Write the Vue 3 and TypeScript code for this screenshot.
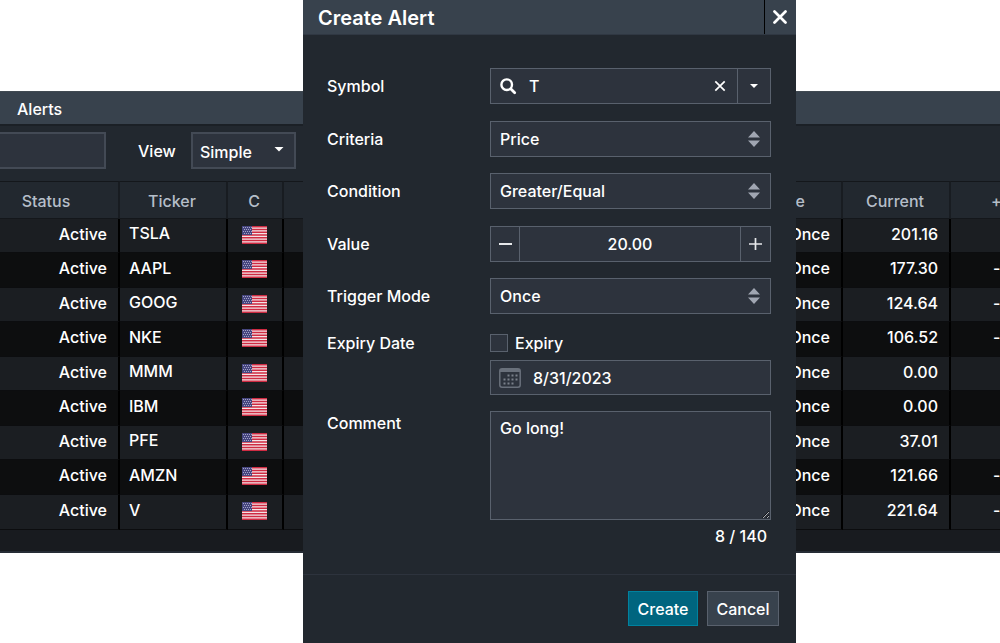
<script setup lang="ts">
import { ref } from 'vue'

interface Alert {
  ticker: string
  current: string
  change: string
}

const alerts: Alert[] = [
  { ticker: 'TSLA', current: '201.16', change: '' },
  { ticker: 'AAPL', current: '177.30', change: '-' },
  { ticker: 'GOOG', current: '124.64', change: '-' },
  { ticker: 'NKE', current: '106.52', change: '-' },
  { ticker: 'MMM', current: '0.00', change: '' },
  { ticker: 'IBM', current: '0.00', change: '' },
  { ticker: 'PFE', current: '37.01', change: '' },
  { ticker: 'AMZN', current: '121.66', change: '-' },
  { ticker: 'V', current: '221.64', change: '-' },
]

const filter = ref('')
const view = ref('Simple')
const symbol = ref('T')
const criteria = ref('Price')
const condition = ref('Greater/Equal')
const amount = ref('20.00')
const trigger = ref('Once')
const expires = ref(false)
const expiry = ref('8/31/2023')
const comment = ref('Go long!')

function step(delta: number) {
  amount.value = (Number(amount.value) + delta).toFixed(2)
}
</script>

<template>
  <div class="page">
    <main class="panel">
      <h2 class="panel-title">Alerts</h2>
      <div class="toolbar">
        <input v-model="filter" class="filter" type="text" aria-label="Filter" />
        <label for="view">View</label>
        <div class="view-box">
          <select id="view" v-model="view">
            <option>Simple</option>
          </select>
          <svg class="caret" width="10" height="5" viewBox="0 0 10 5" aria-hidden="true"><path d="M.5 0h9L5 4.6z" fill="#fff" /></svg>
        </div>
      </div>
      <table>
        <colgroup>
          <col class="c-status" />
          <col class="c-ticker" />
          <col class="c-country" />
          <col />
          <col class="c-current" />
          <col class="c-change" />
        </colgroup>
        <thead>
          <tr>
            <th class="status">Status</th>
            <th>Ticker</th>
            <th>C</th>
            <th class="mode">e</th>
            <th>Current</th>
            <th class="change">+</th>
          </tr>
        </thead>
        <tbody>
          <tr v-for="a in alerts" :key="a.ticker">
            <td class="num">Active</td>
            <td class="ticker">{{ a.ticker }}</td>
            <td class="country">
              <svg class="flag" width="25" height="18" viewBox="0 0 25 18" role="img" aria-label="US">
                <rect width="25" height="18" fill="#f3e3e6" />
                <path d="M0 .7h25M0 3.5h25M0 6.2h25M0 9h25M0 11.8h25M0 14.5h25M0 17.3h25" stroke="#cf2b42" stroke-width="1.4" />
                <rect width="10" height="9" fill="#46467f" />
                <path d="M1 1.5h9M2 3.5h8M1 5.5h9M2 7.5h8" stroke="#a3a3c6" stroke-width="1" stroke-dasharray="1 1" />
              </svg>
            </td>
            <td class="num">Once</td>
            <td class="num">{{ a.current }}</td>
            <td class="change">{{ a.change }}</td>
          </tr>
        </tbody>
      </table>
    </main>

    <section class="dialog" role="dialog" aria-labelledby="dialog-title">
      <header>
        <h1 id="dialog-title">Create Alert</h1>
        <button class="close" type="button" aria-label="Close">
          <svg width="14" height="14" viewBox="0 0 14 14"><path d="M1.5 1.5l11 11M12.5 1.5l-11 11" stroke="#fff" stroke-width="2.7" stroke-linecap="round" /></svg>
        </button>
      </header>

      <form @submit.prevent>
        <div class="fields">
          <label for="symbol">Symbol</label>
          <div class="box">
            <svg class="search" width="17" height="17" viewBox="0 0 17 17" aria-hidden="true"><circle cx="6.7" cy="6.7" r="5.3" fill="none" stroke="#fff" stroke-width="2.4" /><path d="M10.7 10.7l4 4" stroke="#fff" stroke-width="2.8" stroke-linecap="round" /></svg>
            <input id="symbol" v-model="symbol" type="text" />
            <button class="clear" type="button" aria-label="Clear" @click="symbol = ''">
              <svg width="12" height="12" viewBox="0 0 12 12"><path d="M1.3 1.3l9.4 9.4M10.7 1.3l-9.4 9.4" stroke="#fff" stroke-width="1.7" /></svg>
            </button>
            <button class="drop" type="button" aria-label="Show symbols">
              <svg width="8" height="4" viewBox="0 0 8 4"><path d="M0 0h8L4 4z" fill="#fff" /></svg>
            </button>
          </div>

          <label for="criteria">Criteria</label>
          <div class="box">
            <select id="criteria" v-model="criteria"><option>Price</option></select>
            <svg class="sort" width="12" height="16" viewBox="0 0 12 16" aria-hidden="true"><path d="M6 0l6 6.6H0zM0 9.4h12L6 16z" fill="#a0a6b2" /></svg>
          </div>

          <label for="condition">Condition</label>
          <div class="box">
            <select id="condition" v-model="condition"><option>Greater/Equal</option></select>
            <svg class="sort" width="12" height="16" viewBox="0 0 12 16" aria-hidden="true"><path d="M6 0l6 6.6H0zM0 9.4h12L6 16z" fill="#a0a6b2" /></svg>
          </div>

          <label for="amount">Value</label>
          <div class="box">
            <button class="minus" type="button" aria-label="Decrease" @click="step(-1)">
              <svg width="13" height="13" viewBox="0 0 13 13"><path d="M0 6h13" stroke="#e6e8ea" stroke-width="2" /></svg>
            </button>
            <input id="amount" v-model="amount" class="amount" type="text" />
            <button class="plus" type="button" aria-label="Increase" @click="step(1)">
              <svg width="13" height="13" viewBox="0 0 13 13"><path d="M0 6h13M6.5 0v12" stroke="#e6e8ea" stroke-width="1.7" /></svg>
            </button>
          </div>

          <label for="trigger">Trigger Mode</label>
          <div class="box">
            <select id="trigger" v-model="trigger"><option>Once</option></select>
            <svg class="sort" width="12" height="16" viewBox="0 0 12 16" aria-hidden="true"><path d="M6 0l6 6.6H0zM0 9.4h12L6 16z" fill="#a0a6b2" /></svg>
          </div>

          <label class="top" for="expiry">Expiry Date</label>
          <div class="expiry">
            <label class="check"><input v-model="expires" type="checkbox" />Expiry</label>
            <div class="box date">
              <svg class="calendar" width="22" height="20" viewBox="0 0 22 20" aria-hidden="true">
                <rect x=".8" y=".8" width="20.4" height="18.4" rx="2.2" fill="none" stroke="#69707b" stroke-width="1.5" />
                <path d="M1 1h20v3H1z" fill="#69707b" />
                <path d="M8.5 7.5h11M4.5 11.5h14M4.5 15.5h10" stroke="#7a808a" stroke-width="2" stroke-dasharray="2 2" />
              </svg>
              <input id="expiry" v-model="expiry" type="text" />
            </div>
          </div>

          <label class="top" for="comment">Comment</label>
          <div class="comment">
            <textarea id="comment" v-model="comment" maxlength="140"></textarea>
            <output for="comment">{{ comment.length }} / 140</output>
          </div>
        </div>

        <footer>
          <button class="action primary" type="submit">Create</button>
          <button class="action" type="button">Cancel</button>
        </footer>
      </form>
    </section>
  </div>
</template>

<style>
body {
  margin: 0;
  background: #fff;
}
</style>

<style scoped>
.page {
  position: relative;
  min-height: 100vh;
  overflow: hidden;
  padding-top: 91px;
  box-sizing: border-box;
  color: #fff;
  font: 500 16px/20px Inter, "Liberation Sans", sans-serif;
}
.page *,
.page *::before {
  box-sizing: border-box;
}
button,
input,
select,
textarea {
  margin: 0;
  padding: 0;
  border: 0;
  border-radius: 0;
  outline: 0;
  background: transparent;
  color: inherit;
  font: inherit;
  appearance: none;
}
svg {
  display: block;
  flex: none;
}
button {
  display: flex;
  align-items: center;
  justify-content: center;
}

.panel {
  padding-bottom: 21px;
  border-bottom: 2px solid #262c35;
  background: #181b1f;
}
.panel-title {
  height: 35px;
  margin: 0;
  padding: 7px 17px;
  border-top: 1px solid #414a52;
  border-bottom: 2px solid #1b2026;
  background: #38424d;
  font: inherit;
}
.toolbar {
  display: flex;
  align-items: flex-start;
  height: 55px;
  padding-top: 6px;
  background: #22282f;
}
.filter,
.view-box {
  height: 37px;
  border: 2px solid #434a55;
  background: #2d333d;
}
.filter {
  width: 106px;
  border-left: 0;
}
.toolbar label {
  width: 85px;
  padding: 9px 0 0 32px;
}
.view-box {
  display: flex;
  align-items: center;
  width: 105px;
}
.view-box select {
  width: 100%;
  height: 100%;
  padding: 2px 0 0 7px;
}
.caret {
  margin: 0 10px 3px -20px;
}

table {
  width: 100%;
  border-collapse: separate;
  border-spacing: 0;
  table-layout: fixed;
}
.c-status {
  width: 120px;
}
.c-ticker,
.c-current {
  width: 108px;
}
.c-country {
  width: 56px;
}
.c-change {
  width: 49px;
}
th {
  height: 38px;
  padding: 2px 2px 0 0;
  border-top: 1px solid #14171b;
  border-bottom: 1px solid #14171b;
  border-right: 2px solid #181c21;
  background: #22282f;
  color: #b5bec9;
  font-weight: 500;
}
th.status {
  padding-right: 26px;
}
th.mode {
  padding-right: 36px;
  text-align: right;
}
td {
  height: 34px;
  padding: 0 0 4px;
  border-right: 2px solid #000;
  border-bottom: 1px solid #0c0d0f;
  background: #1b1e22;
}
tr:nth-child(even) td {
  height: 35px;
  background: #0d0e0f;
}
tr:last-child td {
  height: 35px;
}
th:last-child,
td:last-child {
  border-right: 0;
}
.num {
  padding-right: 11px;
  text-align: right;
}
.ticker {
  padding: 0 0 5px 9px;
}
.country {
  padding: 0 1px 2px 0;
}
.flag {
  margin: 0 auto;
}
.change {
  padding-right: 0;
  padding-left: 40px;
  overflow: hidden;
  text-align: left;
}
td.change {
  padding-left: 42px;
}

.dialog {
  position: absolute;
  top: 0;
  bottom: 0;
  left: 303px;
  right: 204px;
  background: #22282f;
}
.dialog header {
  display: flex;
  justify-content: space-between;
  height: 35px;
  border-bottom: 1px solid #303843;
  background: #38424d;
}
h1 {
  margin: 0;
  padding: 6px 15px;
  font: 600 20px/24px Inter, "Liberation Sans", sans-serif;
}
.close {
  width: 32px;
  padding-right: 2px;
  border-left: 1px solid #000;
}
.fields {
  display: grid;
  grid-template-columns: 163px minmax(0, 1fr);
  grid-template-rows: 36px 35px 36px 35px 36px 63px auto;
  row-gap: 17px;
  align-items: center;
  padding: 33px 25px 28px 24px;
}
.box {
  display: flex;
  align-items: center;
  align-self: start;
  height: 36px;
  border: 1px solid #59616d;
  background: #2d333d;
}
.box input,
.box select {
  flex: 1;
  min-width: 0;
  height: 100%;
}
.box select {
  padding-left: 9px;
}
.search {
  margin: 0 12px 0 9px;
}
.clear {
  width: 34px;
  height: 100%;
}
.drop {
  width: 33px;
  height: 100%;
  border-left: 1px solid #59616d;
}
.sort {
  margin: 0 10px;
}
.minus,
.plus {
  width: 29px;
  height: 100%;
}
.minus {
  border-right: 1px solid #59616d;
}
.plus {
  width: 30px;
  border-left: 1px solid #59616d;
}
.box .amount {
  text-align: center;
}
.fields > .top {
  align-self: start;
  padding-top: 2px;
}
.expiry {
  align-self: start;
  padding-top: 2px;
}
.check {
  display: flex;
  align-items: center;
  gap: 7px;
  margin-bottom: 7px;
}
.check input {
  width: 18px;
  height: 18px;
  border: 1px solid #59616d;
  background: #2d333d;
}
.check input:checked {
  background: #00657f;
}
.date {
  height: 35px;
}
.calendar {
  margin: 0 12px 0 8px;
}
textarea {
  display: block;
  width: 100%;
  height: 109px;
  padding: 6px 9px;
  border: 1px solid #59616d;
  background: #2d333d;
  resize: vertical;
}
output {
  display: block;
  padding: 6px 4px 0;
  text-align: right;
}
footer {
  display: flex;
  justify-content: flex-end;
  gap: 9px;
  padding: 16px 17px;
  border-top: 1px solid #2d333d;
}
.action {
  min-width: 72px;
  height: 35px;
  padding: 0 8px;
  border: 1px solid #59616d;
  background: #38424d;
}
.primary {
  min-width: 70px;
  border-color: #00829f;
  background: #00657f;
}
</style>
